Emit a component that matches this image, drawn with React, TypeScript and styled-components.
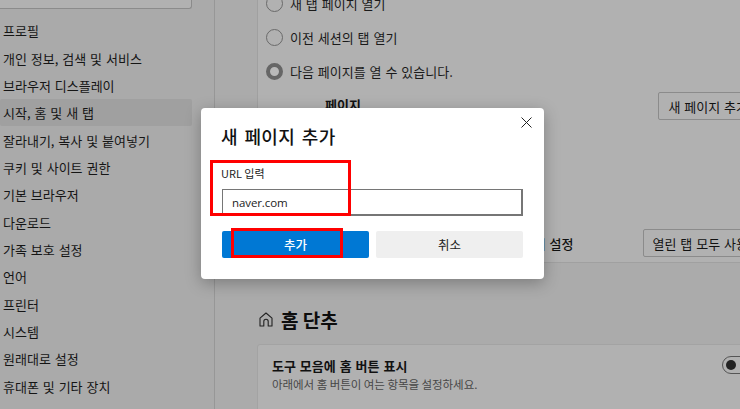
import React from "react";
import styled, { createGlobalStyle } from "styled-components";

const Global = createGlobalStyle`
  html, body { margin: 0; padding: 0; width: 740px; height: 409px; overflow: hidden; background: #ababab; }
  * { box-sizing: border-box; }
  body { font-family: "Noto Sans CJK KR", "Noto Sans", sans-serif; color: #111; }
`;

const Page = styled.div`
  position: relative;
  display: flex;
  width: 740px;
  height: 409px;
  overflow: hidden;
  background: #ababab;
`;

const Sidebar = styled.nav`
  flex: none;
  width: 215px;
  height: 409px;
  padding: 0 22px 0 0;
  border-right: 1px solid #979797;
  background: #aaaaaa;
`;

const SearchBox = styled.div`
  height: 9px;
  margin-bottom: 8px;
  border: 1px solid #8b8b8b;
  border-top: 0;
  border-left: 0;
  border-radius: 0 0 3px 0;
  background: #b1b1b1;
`;

const MenuItem = styled.div<{ $active?: boolean }>`
  height: 27.35px;
  padding-left: 3px;
  display: flex;
  align-items: center;
  font-size: 13px;
  word-spacing: 1px;
  white-space: nowrap;
  color: #151515;
  border-radius: 2px;
  background: ${(p) => (p.$active ? "#a0a0a0" : "transparent")};
`;

const Main = styled.main`
  flex: 1;
  min-width: 0;
  padding-left: 42px;
  overflow: hidden;
`;

const TopCard = styled.section`
  width: 520px;
  height: 278px;
  margin-top: -15px;
  padding: 0 18px 0 8px;
  border: 1px solid #a0a0a0;
  border-radius: 3px;
  background: #b1b1b1;
`;

const RadioRow = styled.div`
  height: 34px;
  display: flex;
  align-items: center;
  gap: 7px;
  font-size: 13px;
  word-spacing: 1px;
  color: #1a1a1a;
  white-space: nowrap;
`;

const Radio = styled.span<{ $checked?: boolean }>`
  flex: none;
  width: 17px;
  height: 17px;
  border-radius: 50%;
  border: ${(p) => (p.$checked ? "4px solid #666666" : "1px solid #6a6a6a")};
  background: ${(p) => (p.$checked ? "#b9b9b9" : "transparent")};
`;

const PagesRow = styled.div`
  height: 32px;
  margin-top: 4px;
  padding-left: 59px;
  display: flex;
  align-items: flex-start;
  justify-content: space-between;
`;

const PagesLabel = styled.span`
  font-size: 13px;
  font-weight: 700;
  padding-top: 3px;
`;

const OutlineButton = styled.div`
  flex: none;
  height: 28px;
  padding: 0 9px;
  display: flex;
  align-items: center;
  font-size: 13px;
  word-spacing: 1px;
  white-space: nowrap;
  border: 1px solid #8b8b8b;
  border-radius: 2px;
  background: #b1b1b1;
`;

const BottomRow = styled.div`
  height: 28px;
  margin-top: 105px;
  display: flex;
  align-items: center;
  justify-content: flex-end;
  gap: 69px;
`;

const RowLabel = styled.span`
  font-size: 13px;
  font-weight: 500;
  word-spacing: 1px;
  white-space: nowrap;
`;

const HomeHeading = styled.h2`
  margin: 43px 0 12px 2px;
  height: 26px;
  display: flex;
  align-items: center;
  gap: 8px;
  font-size: 19px;
  font-weight: 700;
  color: #0d0d0d;
`;

const HomeCard = styled.section`
  position: relative;
  width: 520px;
  height: 80px;
  padding: 12px 14px;
  border: 1px solid #a3a3a3;
  border-radius: 3px;
  background: #b1b1b1;
`;

const CardTitle = styled.div`
  font-size: 13px;
  font-weight: 700;
  word-spacing: 1px;
  line-height: 18px;
  color: #111;
`;

const CardSub = styled.div`
  font-size: 11.5px;
  letter-spacing: -0.05px;
  line-height: 19px;
  color: #474747;
`;

const Toggle = styled.span`
  position: absolute;
  left: 464px;
  top: 11px;
  width: 40px;
  height: 18px;
  border: 1px solid #555;
  border-radius: 9px;
  &::before {
    content: "";
    position: absolute;
    left: 3px;
    top: 3px;
    width: 10px;
    height: 10px;
    border-radius: 50%;
    background: #222;
  }
`;

const Dialog = styled.div`
  position: absolute;
  left: 201px;
  top: 108px;
  width: 343px;
  height: 171px;
  padding: 15px 20px 0 20px;
  background: #fff;
  border-radius: 4px;
  box-shadow: 0 4px 16px rgba(0, 0, 0, 0.28);
`;

const CloseButton = styled.span`
  position: absolute;
  right: 11px;
  top: 8px;
  width: 13px;
  height: 13px;
  display: flex;
`;

const DialogTitle = styled.h1`
  margin: 0;
  height: 26px;
  line-height: 26px;
  font-size: 18px;
  font-weight: 500;
  word-spacing: 2px;
  letter-spacing: 0.4px;
  color: #111;
`;

const FieldLabel = styled.label`
  display: block;
  margin: 15px 0 0 0;
  height: 18px;
  line-height: 18px;
  font-size: 11px;
  color: #222;
`;

const UrlInput = styled.div`
  height: 27px;
  margin: 7px 0 0 1px;
  width: 301px;
  padding: 0 9px;
  display: flex;
  align-items: center;
  font-family: "Open Sans", "Noto Sans", sans-serif;
  font-size: 11.5px;
  letter-spacing: -0.1px;
  color: #222;
  border: 1px solid #767676;
  border-width: 1px 2px 2px 1px;
`;

const ButtonRow = styled.div`
  display: flex;
  gap: 7px;
  margin: 15px 0 0 1px;
  width: 301px;
`;

const DialogButton = styled.div<{ $primary?: boolean }>`
  flex: 1;
  height: 27px;
  display: flex;
  align-items: center;
  justify-content: center;
  font-size: 12.5px;
  font-weight: ${(p) => (p.$primary ? 500 : 400)};
  color: ${(p) => (p.$primary ? "#fff" : "#222")};
  background: ${(p) => (p.$primary ? "#0078d4" : "#efefef")};
  border-radius: 2px;
`;

const RedBox = styled.div<{ $x: number; $y: number; $w: number; $h: number }>`
  position: absolute;
  left: ${(p) => p.$x}px;
  top: ${(p) => p.$y}px;
  width: ${(p) => p.$w}px;
  height: ${(p) => p.$h}px;
  border: 3px solid #ff0000;
  pointer-events: none;
`;

const menu = [
  "프로필",
  "개인 정보, 검색 및 서비스",
  "브라우저 디스플레이",
  "시작, 홈 및 새 탭",
  "잘라내기, 복사 및 붙여넣기",
  "쿠키 및 사이트 권한",
  "기본 브라우저",
  "다운로드",
  "가족 보호 설정",
  "언어",
  "프린터",
  "시스템",
  "원래대로 설정",
  "휴대폰 및 기타 장치",
];

export default function App() {
  return (
    <Page>
      <Global />
      <Sidebar>
        <SearchBox />
        {menu.map((m, i) => (
          <MenuItem key={m} $active={i === 3}>
            {m}
          </MenuItem>
        ))}
      </Sidebar>
      <Main>
        <TopCard>
          <RadioRow>
            <Radio />새 탭 페이지 열기
          </RadioRow>
          <RadioRow>
            <Radio />이전 세션의 탭 열기
          </RadioRow>
          <RadioRow>
            <Radio $checked />다음 페이지를 열 수 있습니다.
          </RadioRow>
          <PagesRow>
            <PagesLabel>페이지</PagesLabel>
            <OutlineButton>새 페이지 추가</OutlineButton>
          </PagesRow>
          <BottomRow>
            <RowLabel>새 탭 페이지의 설정</RowLabel>
            <OutlineButton>열린 탭 모두 사용</OutlineButton>
          </BottomRow>
        </TopCard>
        <HomeHeading>
          <svg width="14" height="15" viewBox="0 0 14 15" fill="none" stroke="#222" strokeWidth="1.1">
            <path d="M1 6.2 7 1l6 5.2V14H9.2V9.5a2.2 2.2 0 0 0-4.4 0V14H1Z" strokeLinejoin="round" />
          </svg>
          홈 단추
        </HomeHeading>
        <HomeCard>
          <CardTitle>도구 모음에 홈 버튼 표시</CardTitle>
          <CardSub>아래에서 홈 버튼이 여는 항목을 설정하세요.</CardSub>
          <Toggle />
        </HomeCard>
      </Main>
      <Dialog>
        <CloseButton>
          <svg width="13" height="13" viewBox="0 0 13 13" stroke="#222" strokeWidth="1">
            <path d="M1.5 1.5l10 10M11.5 1.5l-10 10" />
          </svg>
        </CloseButton>
        <DialogTitle>새 페이지 추가</DialogTitle>
        <FieldLabel>URL 입력</FieldLabel>
        <UrlInput>naver.com</UrlInput>
        <ButtonRow>
          <DialogButton $primary>추가</DialogButton>
          <DialogButton>취소</DialogButton>
        </ButtonRow>
      </Dialog>
      <RedBox $x={210} $y={160} $w={141} $h={56} />
      <RedBox $x={231} $y={228} $w={112} $h={30} />
    </Page>
  );
}
